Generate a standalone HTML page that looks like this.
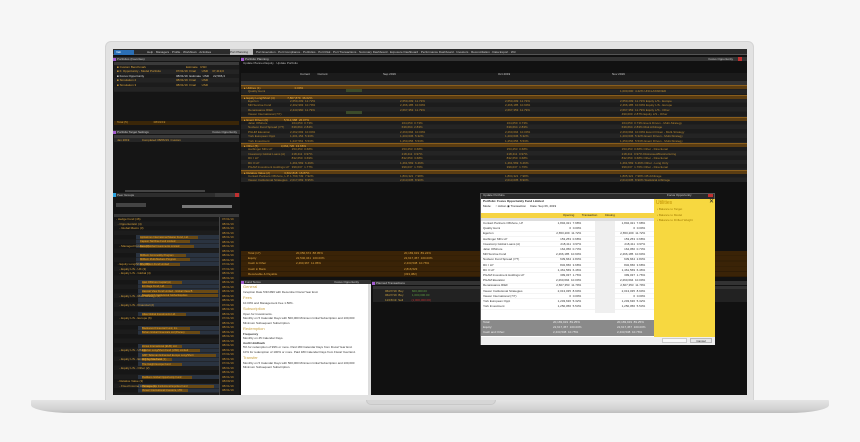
<!DOCTYPE html>
<html><head><meta charset="utf-8"><style>
*{margin:0;padding:0;box-sizing:border-box}
body{width:860px;height:442px;background:#f6f6f6;position:relative;overflow:hidden;font-family:"Liberation Sans",sans-serif;font-size:3.5px;color:#d6a03a}
.a{position:absolute}
.hd{position:absolute;background:#333;color:#ccc;height:4px;line-height:4px;padding-left:4px;font-size:3px}
.hd:before{content:"";position:absolute;left:0;top:0.5px;width:3px;height:3px;background:#a25bd0}
.rows{background:repeating-linear-gradient(#1c1c1c 0 4.4px,#242424 4.4px 8.8px)}
.grp{position:absolute;height:4.4px;background:#5b3d12;border-top:.5px solid #8a5e1c;color:#f0b040;line-height:4px;padding-left:3px;font-size:3px}
.t{position:absolute;white-space:nowrap;font-size:3px;line-height:4.4px}
.ob{position:absolute;height:3px;background:#6a4a14;color:#e8a838;font-size:2.6px;line-height:3px;white-space:nowrap;overflow:hidden}
</style></head><body>
<div class="a" style="left:105px;top:41px;width:649px;height:362px;background:#e2e2e2;border-radius:6px 6px 0 0;border:1px solid #d4d4d4"></div>
<div class="a" style="left:31px;top:400px;width:798px;height:13px;background:linear-gradient(#e4e4e4,#d2d2d2 70%,#bdbdbd);border-radius:1px 1px 40px 40px/1px 1px 8px 8px"></div>
<div class="a" style="left:366px;top:400px;width:130px;height:5px;background:#d6d6d6;border-radius:0 0 6px 6px;border:1px solid #c8c8c8;border-top:none"></div>
<div class="a" style="left:113px;top:49px;width:634px;height:346px;background:#111"></div>
<div class="a" style="left:113px;top:49px;width:634px;height:6px;background:#2b2b2b;border-bottom:1px solid #555"></div>
<div class="a" style="left:114px;top:50px;width:20px;height:5px;background:#2b6fb5;color:#fff;font-size:3px;line-height:5px;padding-left:2px">Vab</div>
<div class="t" style="left:147px;top:49px;color:#ccc;line-height:6px">Help · Managers · Profile · Workflows · Activities</div>
<div class="a" style="left:230px;top:49px;width:23px;height:6px;background:#bbb;color:#222;font-size:3px;line-height:6px">Port Planning</div>
<div class="t" style="left:256px;top:49px;color:#ccc;line-height:6px">Port Execution · Port Compliance · Portfolios · Port Risk · Port Transactions · Summary Dashboard · Exposure Dashboard · Performance Dashboard · Investors · Reconciliation · Data Export · Wd</div>

<div class="a" style="left:113px;top:56px;width:127px;height:339px;background:#151515"></div>
<div class="hd" style="left:113px;top:57px;width:127px">Portfolios (Favorites)</div>
<div class="a" style="left:114px;top:62px;width:125px;height:3px;background:#3a3a3a"></div>
<div class="a rows" style="left:114px;top:65px;width:125px;height:27px"></div>
<div class="t" style="left:117px;top:65px">■ Custom Benchmark<br>■ F. Opportunity - Model Portfolio<br><span style="color:#ddd">■ Focus Opportunity</span><br>■ Simulation 2<br>■ Simulation 3</div>
<div class="t" style="left:176px;top:65px">&nbsp; &nbsp; &nbsp; &nbsp; &nbsp; &nbsp; Estimate &nbsp; USD<br>07/31/19 &nbsp;Final &nbsp; &nbsp; &nbsp; USD &nbsp; &nbsp; 37,419,0<br><span style="color:#ddd">08/31/19 &nbsp;Estimate &nbsp;USD &nbsp; &nbsp; 22,596,3</span><br>08/31/19 &nbsp;Final &nbsp; &nbsp; &nbsp; USD<br>08/31/19 &nbsp;Final &nbsp; &nbsp; &nbsp; USD</div>
<div class="a" style="left:114px;top:121px;width:125px;height:4px;background:#3a2608"></div>
<div class="t" style="left:117px;top:120px">Total (5) &nbsp; &nbsp; &nbsp; &nbsp; &nbsp; &nbsp; &nbsp; &nbsp; &nbsp; &nbsp; &nbsp; &nbsp; &nbsp; &nbsp; &nbsp; 08/31/19</div>
<div class="hd" style="left:113px;top:130px;width:127px">Portfolio Target Settings <span style="float:right;padding-right:3px">Focus Opportunity</span></div>
<div class="a" style="left:114px;top:135px;width:125px;height:3px;background:#3a3a3a"></div>
<div class="a" style="left:114px;top:138px;width:125px;height:4px;background:#262626"></div>
<div class="t" style="left:117px;top:138px">Jan 2019 &nbsp; &nbsp; &nbsp; &nbsp; &nbsp; &nbsp; &nbsp; Completed 08/06/19 &nbsp;Custom</div>
<div class="a" style="left:125px;top:190px;width:80px;height:2px;background:#444"></div>
<div class="hd" style="left:113px;top:193px;width:127px;background:#2d2d2d">Peer Groups</div>
<div class="a" style="left:113px;top:193px;width:3px;height:4px;background:#2aa3e0"></div>
<div class="a" style="left:215px;top:193px;width:20px;height:4px;background:#3a3a3a"></div>
<div class="a" style="left:235px;top:193px;width:4px;height:4px;background:#c03030"></div>
<div class="a" style="left:116px;top:203px;width:30px;height:4px;background:#444"></div>
<div class="a" style="left:182px;top:205px;width:50px;height:3px;background:#777"></div>
<div class="a" style="left:114px;top:214px;width:125px;height:3px;background:#3a3a3a"></div>
<div class="a" style="left:114px;top:217px;width:105px;height:178px;background:repeating-linear-gradient(#161616 0 4.5px,#1c1c1c 4.5px 9px)"></div>
<div class="a" style="left:219px;top:217px;width:20px;height:178px;background:#1a1a1a;border-left:1px solid #444"></div>
<!-- highlighted rows with orange label boxes -->
<div class="a" style="left:136px;top:235px;width:83px;height:13px;background:repeating-linear-gradient(#2a3340 0 4px,#1a1a1a 4px 4.5px)"></div>
<div class="ob" style="left:140px;top:235.5px;width:58px">Aptissimus International Master Fund, Ltd.</div>
<div class="ob" style="left:140px;top:240px;width:50px">Capeon Tail Rise Fund Limited</div>
<div class="ob" style="left:140px;top:244.5px;width:54px">Nexus Global Investments Limited</div>
<div class="a" style="left:136px;top:253px;width:83px;height:13px;background:repeating-linear-gradient(#2a3340 0 4px,#1a1a1a 4px 4.5px)"></div>
<div class="ob" style="left:140px;top:253.5px;width:46px">Millburn Commodity Program</div>
<div class="ob" style="left:140px;top:258px;width:50px">Millburn Multi-Markets Program</div>
<div class="ob" style="left:140px;top:262.5px;width:40px">The Winton Fund Limited</div>
<div class="a" style="left:138px;top:280px;width:81px;height:27px;background:repeating-linear-gradient(#2a3340 0 4px,#1a1a1a 4px 4.5px)"></div>
<div class="ob" style="left:142px;top:280.5px;width:40px">Ajan Offshore Capital (A)</div>
<div class="ob" style="left:142px;top:285px;width:30px">Ermitage Fund, Ltd.</div>
<div class="ob" style="left:142px;top:289.5px;width:76px">Harvest View Fund Limited - Global Class B</div>
<div class="ob" style="left:142px;top:294px;width:76px">Nevelovitch Institutional Global Equities</div>
<div class="a" style="left:138px;top:312px;width:81px;height:4px;background:#2a3340"></div>
<div class="ob" style="left:142px;top:312.5px;width:44px">Atlas Global Investments Ltd.</div>
<div class="a" style="left:138px;top:326px;width:81px;height:9px;background:repeating-linear-gradient(#2a3340 0 4px,#1a1a1a 4px 4.5px)"></div>
<div class="ob" style="left:142px;top:326.5px;width:48px">Blackwood Financial Fund, Inc.</div>
<div class="ob" style="left:142px;top:331px;width:58px">Bohan Global Financials Ltd (Pisces)</div>
<div class="a" style="left:138px;top:344px;width:81px;height:22px;background:repeating-linear-gradient(#2a3340 0 4px,#1a1a1a 4px 4.5px)"></div>
<div class="ob" style="left:142px;top:344.5px;width:40px">Zonus International (EUR) Ltd.</div>
<div class="ob" style="left:142px;top:349px;width:58px">Egerton Long/Short Fund (USD) Limited</div>
<div class="ob" style="left:142px;top:353.5px;width:74px">GMT Talisman Enhanced Europe Long/Short</div>
<div class="ob" style="left:142px;top:358px;width:30px">Mill Sunrise Fund</div>
<div class="ob" style="left:142px;top:362.5px;width:40px">The Insight Europe Fund</div>
<div class="a" style="left:138px;top:375px;width:81px;height:4px;background:#2a3340"></div>
<div class="ob" style="left:142px;top:375.5px;width:50px">Ruddens Global Opportunity Fund</div>
<div class="a" style="left:138px;top:384px;width:81px;height:9px;background:repeating-linear-gradient(#2a3340 0 4px,#1a1a1a 4px 4.5px)"></div>
<div class="ob" style="left:142px;top:384.5px;width:72px">Renaissance Institutional Equities Fund</div>
<div class="ob" style="left:142px;top:389px;width:46px">Viewer International Investors, LTD</div>
<div class="t" style="left:116px;top:217px;line-height:4.5px">- Hedge Fund (46)<br>&nbsp; - Opportunistic (4)<br>&nbsp; &nbsp; - Global Macro (3)<br><br><br><br>&nbsp; &nbsp; - Managed Futures (3)<br><br><br><br>&nbsp; - Equity Long/Short (20)<br>&nbsp; &nbsp; - Equity L/S - UK (3)<br>&nbsp; &nbsp; - Equity L/S - Global (4)<br><br><br><br><br>&nbsp; &nbsp; - Equity L/S - Multi Strategy (1)<br><br>&nbsp; &nbsp; - Equity L/S - Financial (2)<br><br><br>&nbsp; &nbsp; - Equity L/S - Europe (6)<br><br><br><br><br><br><br>&nbsp; &nbsp; - Equity L/S - US (1)<br><br>&nbsp; &nbsp; - Equity L/S - Emerging Markets (1)<br><br>&nbsp; &nbsp; - Equity L/S - Other (2)<br><br><br>&nbsp; - Relative Value (3)<br>&nbsp; &nbsp; - Fixed Income Arbitrage (1)</div>
<div class="t" style="left:222px;top:217px;line-height:4.5px;color:#c89030">07/31/19<br>08/31/19<br>08/31/19<br>08/31/19<br>08/31/19<br>08/31/19<br>08/31/19<br>08/31/19<br>08/31/19<br>08/31/19<br>07/31/19<br>07/31/19<br>08/31/19<br>08/31/19<br>08/31/19<br>08/31/19<br>08/31/19<br>08/31/19<br>08/31/19<br>07/31/19<br>08/31/19<br>08/31/19<br>07/31/19<br>08/31/19<br>08/31/19<br>08/31/19<br>08/31/19<br>08/31/19<br>08/31/19<br>08/31/19<br>07/31/19<br>08/31/19<br>07/31/19<br>08/31/19<br>08/31/19<br>08/31/19<br>08/09/19<br>08/31/19<br>08/31/19</div>

<div class="hd" style="left:241px;top:57px;width:506px">Portfolio Planning <span style="float:right;padding-right:14px">Focus Opportunity</span></div>
<div class="a" style="left:738px;top:57px;width:4px;height:4px;background:#c03030"></div>
<div class="t" style="left:243px;top:61px;color:#bbb">Update Planned Equity · Update Portfolio</div>
<div class="a" style="left:241px;top:73px;width:506px;height:12px;background:#1b1b1b;border-bottom:1px solid #555"></div>
<div class="t" style="left:300px;top:72px;color:#ccc">Current &nbsp; &nbsp; &nbsp; &nbsp; Current</div>
<div class="t" style="left:383px;top:72px;color:#ccc">Sep 2019</div><div class="t" style="left:498px;top:72px;color:#ccc">Oct 2019</div><div class="t" style="left:612px;top:72px;color:#ccc">Nov 2019</div>
<div class="a" style="left:241px;top:81px;width:506px;height:4px;background:#333"></div>
<div class="a rows" style="left:241px;top:85px;width:506px;height:97px"></div>
<div class="grp" style="left:241px;top:85px;width:506px">▸ Utilities (1) &nbsp; &nbsp; &nbsp; &nbsp; &nbsp; &nbsp; &nbsp; &nbsp; &nbsp; &nbsp; &nbsp; &nbsp; &nbsp; &nbsp; &nbsp; &nbsp; &nbsp; &nbsp; &nbsp; &nbsp; 0.00%</div>
<div class="grp" style="left:241px;top:94.5px;width:506px">▸ Equity Long/Short (4) &nbsp; &nbsp; &nbsp; &nbsp; &nbsp; &nbsp; &nbsp; 7,867,879 &nbsp;36.02%</div>
<div class="grp" style="left:241px;top:116.5px;width:506px">▸ Event Driven (6) &nbsp; &nbsp; &nbsp; &nbsp; &nbsp; &nbsp; &nbsp; &nbsp; &nbsp; 5,514,988 &nbsp;26.07%</div>
<div class="grp" style="left:241px;top:143px;width:506px">▸ Other (5) &nbsp; &nbsp; &nbsp; &nbsp; &nbsp; &nbsp; &nbsp; &nbsp; &nbsp; &nbsp; &nbsp; &nbsp; &nbsp; 3,064,720 &nbsp;13.66%</div>
<div class="grp" style="left:241px;top:169.5px;width:506px">▸ Relative Value (2) &nbsp; &nbsp; &nbsp; &nbsp; &nbsp; &nbsp; &nbsp; &nbsp; 3,602,818 &nbsp;16.87%</div>
<div class="t" style="left:400px;top:85px;color:#f0b040">&nbsp;</div>
<div class="t" style="left:248px;top:89.4px;color:#b98a30">Quality Hemi</div>
<div class="t" style="left:248px;top:99px;color:#b98a30">Egerton<br>Mill Sunrise Fund<br>Renaissance RIEF<br>Viewer International (7/7)</div>
<div class="t" style="left:248px;top:121px;color:#b98a30">Jalon Offshore<br>Nucleon Fund Spread (7/7)<br>PGHM Elevation<br>York European Oppt<br>York Investment</div>
<div class="t" style="left:248px;top:147.4px;color:#b98a30">Harbinger Mfrs LP<br>Investcorp Global Loans (A)<br>RC I LP<br>RC II LP<br>PGAM Investment Holdings LP</div>
<div class="t" style="left:248px;top:174px;color:#b98a30">Contact Partners Offshore, L.P.<br>Viewer Institutional Strategies</div>
<div class="t" style="left:290px;top:99px;color:#b98a30">2,650,209 &nbsp;12.72%<br>2,402,993 &nbsp;10.79%<br>2,443,960 &nbsp;11.79%<br><br><br>&nbsp; 164,050 &nbsp;0.73%<br>&nbsp; 639,664 &nbsp;2.84%<br>2,262,093 &nbsp;10.04%<br>1,201,154 &nbsp;5.33%<br>1,247,561 &nbsp;5.53%<br><br>&nbsp; 153,253 &nbsp;0.68%<br>&nbsp; 218,411 &nbsp;0.97%<br>&nbsp; 832,650 &nbsp;3.69%<br>1,461,569 &nbsp;6.49%<br>&nbsp; 399,037 &nbsp;1.77%<br><br>1,799,749 &nbsp;7.92%<br>2,017,069 &nbsp;8.95%</div>
<div class="t" style="left:400px;top:99px;color:#b98a30">2,650,209 &nbsp;11.72%<br>2,466,185 &nbsp;10.90%<br>2,667,353 &nbsp;11.79%<br><br><br>&nbsp; 164,050 &nbsp;0.73%<br>&nbsp; 639,664 &nbsp;2.83%<br>2,260,694 &nbsp;10.00%<br>1,203,636 &nbsp;5.32%<br>1,250,056 &nbsp;5.53%<br><br>&nbsp; 153,253 &nbsp;0.68%<br>&nbsp; 218,411 &nbsp;0.97%<br>&nbsp; 832,650 &nbsp;3.68%<br>1,461,569 &nbsp;6.46%<br>&nbsp; 399,037 &nbsp;1.76%<br><br>1,804,321 &nbsp;7.98%<br>2,013,035 &nbsp;8.90%</div>
<div class="t" style="left:505px;top:99px;color:#b98a30">2,650,209 &nbsp;11.72%<br>2,466,185 &nbsp;10.90%<br>2,667,353 &nbsp;11.79%<br><br><br>&nbsp; 164,050 &nbsp;0.73%<br>&nbsp; 639,664 &nbsp;2.83%<br>2,260,694 &nbsp;10.00%<br>1,203,636 &nbsp;5.32%<br>1,250,056 &nbsp;5.53%<br><br>&nbsp; 153,253 &nbsp;0.68%<br>&nbsp; 218,411 &nbsp;0.97%<br>&nbsp; 832,650 &nbsp;3.68%<br>1,461,569 &nbsp;6.46%<br>&nbsp; 399,037 &nbsp;1.76%<br><br>1,804,321 &nbsp;7.98%<br>2,013,035 &nbsp;8.90%</div>
<div class="t" style="left:620px;top:89.4px;color:#b98a30">1,000,000 &nbsp;4.42% UNCLASSIFIED</div>
<div class="t" style="left:620px;top:99px;color:#b98a30">2,650,209 &nbsp;11.72% Equity L/S - Europe<br>2,466,185 &nbsp;10.90% Equity L/S - Europe<br>2,667,353 &nbsp;11.79% Equity L/S - Other<br>&nbsp; 490,000 &nbsp;2.87% Equity L/S - Other</div>
<div class="t" style="left:620px;top:121px;color:#b98a30">&nbsp; 164,050 &nbsp;0.73% Event Driven - Multi-Strategy<br>&nbsp; 639,664 &nbsp;2.83% Risk Arbitrage<br>2,260,694 &nbsp;10.00% Event Driven - Multi-Strategy<br>1,203,636 &nbsp;5.32% Event Driven - Multi-Strategy<br>1,250,056 &nbsp;5.53% Event Driven - Multi-Strategy</div>
<div class="t" style="left:620px;top:147.4px;color:#b98a30">&nbsp; 153,253 &nbsp;0.68% Other - Directional<br>&nbsp; 218,411 &nbsp;0.97% Distressed/Restructuring<br>&nbsp; 832,650 &nbsp;3.68% Other - Directional<br>1,461,569 &nbsp;6.46% Other - Long Only<br>&nbsp; 399,037 &nbsp;1.76% Other - Directional</div>
<div class="t" style="left:620px;top:174px;color:#b98a30">1,805,321 &nbsp;7.98% CB Arbitrage<br>2,013,035 &nbsp;8.90% Statistical Arbitrage</div>
<div class="a" style="left:346px;top:89px;width:16px;height:3px;background:#3b4a2a"></div>
<div class="a" style="left:346px;top:111px;width:16px;height:3px;background:#3b4a2a"></div>
<div class="a" style="left:241px;top:251px;width:506px;height:26px;background:repeating-linear-gradient(#3a2307 0 4.4px,#2e1c06 4.4px 5.2px)"></div>
<div class="t" style="left:248px;top:251px;line-height:5.2px;color:#e0a640">Total (17)<br>Equity<br>Cash &amp; Other<br>Cash in Bank<br>Receivable &amp; Payable</div>
<div class="t" style="left:296px;top:251px;line-height:5.2px;color:#e0a640">20,050,674 &nbsp;88.05%<br>22,540,341 &nbsp;100.00%<br>2,490,367 &nbsp;11.05%</div>
<div class="t" style="left:404px;top:251px;line-height:5.2px;color:#e0a640">20,183,919 &nbsp;89.24%<br>22,617,457 &nbsp;100.00%<br>2,433,538 &nbsp;10.76%<br>2,816,523<br>(333,382)</div>

<div class="hd" style="left:241px;top:280px;width:130px">Fund Terms <span style="float:right;padding-right:12px">Focus Opportunity</span></div>
<div class="a" style="left:241px;top:284px;width:127px;height:111px;background:#fff;color:#333;font-size:3px;line-height:4.5px;padding:1px 2px">
<div style="color:#c8a040;font-size:4px">General</div>Inception Date 5/3/1996 with December Fiscal Year End.
<div style="color:#c8a040;font-size:4px;margin-top:2px">Fees</div>10.00% and Management Fee 1.50%.
<div style="color:#c8a040;font-size:4px;margin-top:2px">Subscription</div>Open for Investments.<br>Monthly on 5 Calendar Days with 500,000 Minimum Initial Subscription and 100,000 Minimum Subsequent Subscription.
<div style="color:#c8a040;font-size:4px;margin-top:2px">Redemption</div><b>Frequency</b><br>Monthly on 45 Calendar Days.<br><b>Audit Holdback</b><br>5% for redemption of 99% or more. Paid 180 Calendar Days from Fiscal Year End.<br>10% for redemption of 100% or more. Paid 180 Calendar Days from Fiscal Year End.
<div style="color:#c8a040;font-size:4px;margin-top:2px">Transfer</div>Monthly on 5 Calendar Days with 500,000 Minimum Initial Subscription and 100,000 Minimum Subsequent Subscription.</div>
<div class="a" style="left:368px;top:284px;width:3px;height:111px;background:#ddd"></div>
<div class="hd" style="left:372px;top:281px;width:375px">Planned Transactions</div>
<div class="a" style="left:373px;top:286px;width:374px;height:3px;background:#333"></div>
<div class="a" style="left:373px;top:289px;width:107px;height:13px;background:repeating-linear-gradient(#222 0 4.4px,#1a1a1a 4.4px 4.6px)"></div>
<div class="t" style="left:385px;top:289px;color:#c8a040">06/27/19 &nbsp;Buy &nbsp; &nbsp; &nbsp; &nbsp; &nbsp;<span style="color:#5c9a40">600,000.00</span><br>06/27/19 &nbsp;Buy &nbsp; &nbsp; &nbsp; &nbsp; &nbsp;<span style="color:#5c9a40">1,000,000.00</span><br>11/15/19 &nbsp;Sell &nbsp; &nbsp; &nbsp; &nbsp; &nbsp;<span style="color:#c03030">(1,000,000.00)</span></div>
<div class="a" style="left:714px;top:289px;width:33px;height:13px;background:repeating-linear-gradient(#222 0 4.4px,#1a1a1a 4.4px 4.6px)"></div>

<div class="a" style="left:480px;top:193px;width:235px;height:152px;background:#2a2a2a;border:1px solid #555"></div>
<div class="t" style="left:483px;top:193px;color:#ccc">Update Portfolio</div>
<div class="t" style="left:667px;top:193px;color:#ccc">Focus Opportunity</div>
<div class="a" style="left:708px;top:194px;width:5px;height:3px;background:#c03030"></div>
<div class="a" style="left:481px;top:199px;width:234px;height:138px;background:#fff"></div>
<div class="t" style="left:483px;top:199px;color:#222;font-weight:bold">Portfolio: Focus Opportunity Fund Limited</div>
<div class="t" style="left:483px;top:204px;color:#222">Mode: &nbsp; &nbsp; ○ Action ◉ Transaction &nbsp; &nbsp; Date: Sep 06, 2019</div>
<div class="a" style="left:481px;top:213px;width:173px;height:5px;background:#f6d443"></div>
<div class="t" style="left:563px;top:213px;color:#222">Opening &nbsp; &nbsp; &nbsp; &nbsp; Transaction &nbsp; &nbsp; &nbsp; &nbsp; Closing</div>
<div class="a" style="left:481px;top:218px;width:173px;height:3px;background:#ddd"></div>
<div class="a" style="left:481px;top:221px;width:173px;height:92px;background:repeating-linear-gradient(#fff 0 4.8px,#e8e8e8 4.8px 5.2px)"></div>
<div class="a" style="left:595px;top:221px;width:20px;height:92px;background:#efefef"></div>
<div class="t" style="left:483px;top:221px;color:#333;line-height:5.2px">Contact Partners Offshore, LP<br>Quality Hemi<br>Egerton<br>Harbinger Mfrs LP<br>Investcorp Global Loans (A)<br>Jalon Offshore<br>Mill Sunrise Fund<br>Nucleon Fund Spread (7/7)<br>RC I LP<br>RC II LP<br>PGAM Investment Holdings LP<br>PGAM Elevation<br>Renaissance RIEF<br>Viewer Institutional Strategies<br>Viewer International (7/7)<br>York European Oppt<br>York Investment</div>
<div class="t" style="left:556px;top:221px;color:#333;line-height:5.2px;text-align:right">1,804,321 &nbsp;7.98%<br>0 &nbsp;0.00%<br>2,650,209 &nbsp;11.72%<br>153,253 &nbsp;0.68%<br>218,411 &nbsp;0.97%<br>164,050 &nbsp;0.73%<br>2,466,185 &nbsp;10.90%<br>639,664 &nbsp;2.83%<br>832,650 &nbsp;3.68%<br>1,461,569 &nbsp;6.46%<br>399,037 &nbsp;1.76%<br>2,260,694 &nbsp;10.00%<br>2,667,353 &nbsp;11.79%<br>2,013,035 &nbsp;8.90%<br>0 &nbsp;0.00%<br>1,203,636 &nbsp;5.32%<br>1,250,056 &nbsp;5.53%</div>
<div class="t" style="left:620px;top:221px;color:#333;line-height:5.2px;text-align:right">1,804,321 &nbsp;7.98%<br>0 &nbsp;0.00%<br>2,650,209 &nbsp;11.72%<br>153,253 &nbsp;0.68%<br>218,411 &nbsp;0.97%<br>164,050 &nbsp;0.73%<br>2,466,185 &nbsp;10.90%<br>639,664 &nbsp;2.83%<br>832,650 &nbsp;3.68%<br>1,461,569 &nbsp;6.46%<br>399,037 &nbsp;1.76%<br>2,260,694 &nbsp;10.00%<br>2,667,353 &nbsp;11.79%<br>2,013,035 &nbsp;8.90%<br>0 &nbsp;0.00%<br>1,203,636 &nbsp;5.32%<br>1,250,056 &nbsp;5.53%</div>
<div class="a" style="left:481px;top:320px;width:173px;height:16px;background:#8a8a8a"></div>
<div class="t" style="left:483px;top:320px;color:#eee;line-height:5px">Total:<br>Equity:<br>Cash and Other:</div>
<div class="t" style="left:553px;top:320px;color:#eee;line-height:5px">20,183,919 &nbsp;89.25%<br>22,617,457 &nbsp;100.00%<br>2,433,538 &nbsp;10.75%</div>
<div class="t" style="left:617px;top:320px;color:#eee;line-height:5px">20,183,919 &nbsp;89.25%<br>22,617,457 &nbsp;100.00%<br>2,433,538 &nbsp;10.76%</div>
<div class="a" style="left:654px;top:199px;width:61px;height:138px;background:#f7d840"></div>
<div class="t" style="left:656px;top:200px;color:#c09000;font-size:5px;line-height:6px">Utilities</div>
<div class="t" style="left:709px;top:199px;color:#222;font-size:6px;line-height:6px">✕</div>
<div class="t" style="left:657px;top:207px;color:#a07a00;line-height:5.5px">• Balance to Target<br>• Balance to Model<br>• Balance to Drifted Weight</div>
<div class="a" style="left:481px;top:337px;width:234px;height:8px;background:#efefef"></div>
<div class="a" style="left:662px;top:338px;width:25px;height:5px;background:#fafafa;border:1px solid #ccc"></div>
<div class="a" style="left:690px;top:338px;width:22px;height:5px;background:#e8e8e8;border:1px solid #bbb;color:#222;font-size:3px;line-height:4px;text-align:center">Cancel</div>
</body></html>
